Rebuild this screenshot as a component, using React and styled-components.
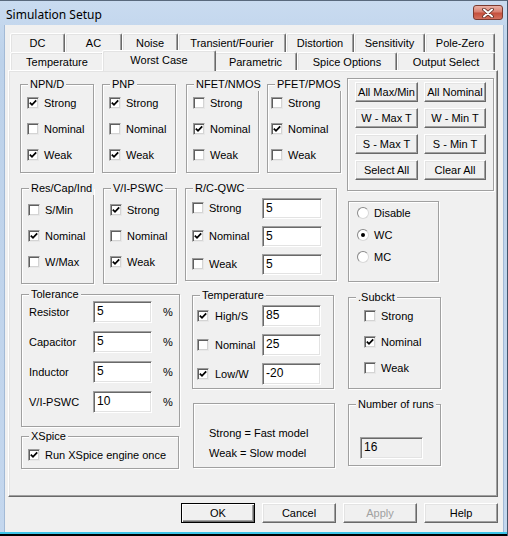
import React from 'react';
import styled, { createGlobalStyle } from 'styled-components';

const GlobalStyle = createGlobalStyle`
  html, body {
    margin: 0;
    padding: 0;
    background: #000;
  }
  body {
    font-family: "Liberation Sans", Arial, sans-serif;
    font-size: 11px;
    color: #000;
  }
`;

const Window = styled.div`
  width: 508px;
  height: 536px;
  box-sizing: border-box;
  border-top: 1px solid #59697d;
  border-right: 1px solid #44546a;
  background: linear-gradient(#c9dbf0, #bdd2ea 60px, #c4d7ee);
  display: flex;
  flex-direction: column;
  overflow: hidden;
`;

const TitleBar = styled.div`
  height: 24px;
  flex: none;
  display: flex;
  align-items: flex-start;
  padding: 0 4px 0 6px;
`;

const TitleText = styled.div`
  flex: 1;
  font-family: "Noto Sans", "Open Sans", sans-serif;
  font-size: 12px;
  line-height: 27px;
  color: #000;
`;

const CloseButton = styled.div`
  width: 30px;
  height: 15px;
  margin-top: 4px;
  box-sizing: border-box;
  border: 1px solid #7a3a30;
  border-radius: 3px;
  background: linear-gradient(#eab1a6, #d98172 45%, #c5503d 55%, #d4705e);
  display: flex;
  align-items: center;
  justify-content: center;
`;

const Body = styled.div`
  flex: none;
  height: 507px;
  margin: 0 3px 0 4px;
  border-left: 1px solid #a3bad6;
  border-right: 1px solid #a3bad6;
  background: #f0f0f0;
  display: flex;
  flex-direction: column;
`;

const BottomEdge = styled.div`
  flex: 1;
  margin-right: -1px;
  background: linear-gradient(#3cc4e8 0 2px, #000 2px);
`;

/* ---------- tabs ---------- */

const TabStrip = styled.div`
  margin: 8px 0 0 3px;
  width: 490px;
`;

const TabRow = styled.div`
  display: flex;
  padding-left: 2px;
  height: ${(p) => p.$h}px;
`;

const Tab = styled.div`
  box-sizing: border-box;
  width: ${(p) => p.$w}px;
  height: 100%;
  border: 1px solid;
  border-bottom: none;
  border-color: #fff #696969 transparent #fff;
  border-radius: 2px 2px 0 0;
  box-shadow: inset -1px 0 #a0a0a0, inset 1px 1px #e3e3e3;
  background: #f0f0f0;
  display: flex;
  align-items: center;
  justify-content: center;
  white-space: nowrap;
`;

const ActiveTab = styled(Tab)`
  position: relative;
  z-index: 1;
  width: ${(p) => p.$w + 4}px;
  height: calc(100% + 3px);
  margin: -2px -2px -1px;
  padding-bottom: 3px;
`;

const Panel = styled.div`
  margin-left: 3px;
  width: 490px;
  height: 427px;
  box-sizing: border-box;
  border: 1px solid;
  border-color: #fff #696969 #696969 #fff;
  box-shadow: inset -1px -1px #a0a0a0, inset 1px 1px #e3e3e3;
  padding: 7px 0 0 11px;
`;

/* ---------- layout ---------- */

const Row = styled.div`
  display: flex;
  align-items: flex-start;
  margin-top: ${(p) => p.$mt || 0}px;
`;

const Col = styled.div`
  display: flex;
  flex-direction: column;
  margin-left: ${(p) => p.$ml || 0}px;
  margin-top: ${(p) => p.$mt || 0}px;
`;

/* ---------- group boxes ---------- */

const Group = styled.div`
  position: relative;
  box-sizing: border-box;
  flex: none;
  width: ${(p) => p.$w}px;
  height: ${(p) => p.$h}px;
  margin-left: ${(p) => p.$ml || 0}px;
  margin-top: ${(p) => p.$mt || 0}px;
  padding: ${(p) => p.$pt || 0}px 0 0 ${(p) => p.$pl || 0}px;
  border: 1px solid #a0a0a0;
  box-shadow: inset 1px 1px #fff, 1px 1px #fff;
`;

const Legend = styled.span`
  position: absolute;
  top: -7px;
  left: 7px;
  padding: 0 2px;
  line-height: 13px;
  background: #f0f0f0;
  white-space: nowrap;
`;

const Item = styled.div`
  display: flex;
  align-items: center;
  height: ${(p) => p.$h}px;
  gap: ${(p) => p.$gap ?? 5}px;
  white-space: nowrap;
`;

const Label = styled.span`
  flex: none;
  width: ${(p) => (p.$w ? `${p.$w}px` : 'auto')};
`;

const CheckBox = styled.span`
  flex: none;
  width: 12px;
  height: 12px;
  box-sizing: border-box;
  background: #fff;
  border: 1px solid;
  border-color: #9a9a9a #e8e8e8 #e8e8e8 #9a9a9a;
  box-shadow: inset 1px 1px #5f5f5f, inset -1px -1px #d4d4d4;
  display: flex;
  align-items: center;
  justify-content: center;
`;

const RadioCircle = styled.span`
  flex: none;
  width: 12px;
  height: 12px;
  box-sizing: border-box;
  border-radius: 50%;
  border: 1px solid;
  border-color: #8a8a8a #d8d8d8 #d8d8d8 #8a8a8a;
  background: #fff;
  display: flex;
  align-items: center;
  justify-content: center;

  &::after {
    content: '';
    width: 4px;
    height: 4px;
    border-radius: 50%;
    background: ${(p) => (p.$on ? '#000' : 'transparent')};
  }
`;

const Field = styled.div`
  flex: none;
  box-sizing: border-box;
  width: ${(p) => p.$w}px;
  height: ${(p) => p.$h || 22}px;
  border: 1px solid;
  border-color: #a0a0a0 #fff #fff #a0a0a0;
  box-shadow: inset 1px 1px #696969, inset -1px -1px #e3e3e3;
  background: ${(p) => (p.$disabled ? '#f0f0f0' : '#fff')};
  padding: 2px 0 0 3px;
  font-size: 12px;
  line-height: 14px;
`;

const Percent = styled.span`
  margin-left: 11px;
`;

const ButtonGrid = styled.div`
  display: grid;
  grid-template-columns: 63px 62px;
  grid-auto-rows: 20px;
  column-gap: 6px;
  row-gap: 6px;
`;

const PushButton = styled.div`
  box-sizing: border-box;
  width: ${(p) => (p.$w ? `${p.$w}px` : 'auto')};
  height: 20px;
  background: #f0f0f0;
  border: 1px solid;
  border-color: ${(p) => (p.$default ? '#000' : '#fff #696969 #696969 #fff')};
  box-shadow: ${(p) =>
    p.$default
      ? 'inset 1px 1px #fff, inset -1px -1px #696969, inset -2px -2px #a0a0a0'
      : 'inset -1px -1px #a0a0a0, inset 1px 1px #e3e3e3'};
  color: ${(p) => (p.$disabled ? '#a0a0a0' : '#000')};
  display: flex;
  align-items: center;
  justify-content: center;
  white-space: nowrap;
`;

const InfoText = styled.div`
  line-height: 20px;
  font-size: 11px;
`;

const Footer = styled.div`
  display: flex;
  justify-content: flex-end;
  gap: 7px;
  padding-right: 5px;
  margin-top: 6px;
`;

/* ---------- small parts ---------- */

function Check({ on }) {
  return (
    <CheckBox>
      {on && (
        <svg width="8" height="8" viewBox="0 0 8 8">
          <path d="M0.8 3.6 L3 5.8 L7.2 1.4" fill="none" stroke="#000" strokeWidth="1.8" />
        </svg>
      )}
    </CheckBox>
  );
}

function CheckItem({ on, label, h = 26, gap = 5, w }) {
  return (
    <Item $h={h} $gap={gap}>
      <Check on={on} />
      <Label $w={w}>{label}</Label>
    </Item>
  );
}

function CheckGroup({ title, items, ...rest }) {
  return (
    <Group {...rest}>
      <Legend>{title}</Legend>
      {items.map(([label, on]) => (
        <CheckItem key={label} label={label} on={on} />
      ))}
    </Group>
  );
}

const topRowA = [
  { title: 'NPN/D', w: 74, ml: 0, pl: 6, items: [['Strong', true], ['Nominal', false], ['Weak', true]] },
  { title: 'PNP', w: 74, ml: 8, pl: 6, items: [['Strong', true], ['Nominal', false], ['Weak', true]] },
  { title: 'NFET/NMOS', w: 73, ml: 10, pl: 6, items: [['Strong', false], ['Nominal', true], ['Weak', false]] },
  { title: 'PFET/PMOS', w: 74, ml: 8, pl: 3, items: [['Strong', false], ['Nominal', true], ['Weak', false]] },
];

const tabsBack = [
  ['DC', 55], ['AC', 57], ['Noise', 56], ['Transient/Fourier', 108],
  ['Distortion', 68], ['Sensitivity', 71], ['Pole-Zero', 70],
];

const tabsFront = [
  ['Temperature', 94], ['Worst Case', 110], ['Parametric', 83],
  ['Spice Options', 100], ['Output Select', 98],
];

const presetButtons = [
  'All Max/Min', 'All Nominal', 'W - Max T', 'W - Min T',
  'S - Max T', 'S - Min T', 'Select All', 'Clear All',
];

export default function App() {
  return (
    <>
      <GlobalStyle />
      <Window>
        <TitleBar>
          <TitleText>Simulation Setup</TitleText>
          <CloseButton>
            <svg width="14" height="10" viewBox="0 0 14 10">
              <path d="M3 1.5 L11 8.5 M11 1.5 L3 8.5" stroke="#5a2a22" strokeWidth="3.6" strokeLinecap="round" />
              <path d="M3 1.5 L11 8.5 M11 1.5 L3 8.5" stroke="#fff" strokeWidth="2" strokeLinecap="round" />
            </svg>
          </CloseButton>
        </TitleBar>

        <Body>
          <TabStrip>
            <TabRow $h={19}>
              {tabsBack.map(([t, w]) => (
                <Tab key={t} $w={w}>{t}</Tab>
              ))}
            </TabRow>
            <TabRow $h={18}>
              {tabsFront.map(([t, w]) =>
                t === 'Worst Case' ? (
                  <ActiveTab key={t} $w={w}>{t}</ActiveTab>
                ) : (
                  <Tab key={t} $w={w}>{t}</Tab>
                )
              )}
            </TabRow>
          </TabStrip>

          <Panel>
            <Row>
              <Col>
                <Row $mt={6}>
                  {topRowA.map((g) => (
                    <CheckGroup
                      key={g.title}
                      title={g.title}
                      items={g.items}
                      $w={g.w}
                      $h={89}
                      $ml={g.ml}
                      $pt={5}
                      $pl={g.pl}
                    />
                  ))}
                </Row>
                <Row $mt={15}>
                  <CheckGroup
                    title="Res/Cap/Ind"
                    items={[['S/Min', false], ['Nominal', true], ['W/Max', false]]}
                    $w={73} $h={96} $ml={1} $pt={8} $pl={6}
                  />
                  <CheckGroup
                    title="V/I-PSWC"
                    items={[['Strong', true], ['Nominal', false], ['Weak', true]]}
                    $w={74} $h={96} $ml={9} $pt={8} $pl={6}
                  />
                  <Group $w={152} $h={93} $ml={8} $pt={5} $pl={6}>
                    <Legend>R/C-QWC</Legend>
                    {[['Strong', false], ['Nominal', true], ['Weak', false]].map(([label, on]) => (
                      <Item key={label} $h={28}>
                        <Check on={on} />
                        <Label $w={48}>{label}</Label>
                        <Field $w={60} $h={21}>5</Field>
                      </Item>
                    ))}
                  </Group>
                </Row>
              </Col>

              <Col $ml={6}>
                <Group $w={147} $h={113} $pt={3} $pl={7}>
                  <ButtonGrid>
                    {presetButtons.map((b) => (
                      <PushButton key={b}>{b}</PushButton>
                    ))}
                  </ButtonGrid>
                </Group>
                <Group $w={91} $h={81} $mt={10} $ml={1} $pl={8}>
                  {[['Disable', false], ['WC', true], ['MC', false]].map(([label, on]) => (
                    <Item key={label} $h={22}>
                      <RadioCircle $on={on} />
                      <Label>{label}</Label>
                    </Item>
                  ))}
                </Group>
              </Col>
            </Row>

            <Row $mt={10}>
              <Col $ml={1}>
                <Group $w={159} $h={133} $pt={2} $pl={7}>
                  <Legend>Tolerance</Legend>
                  {[['Resistor', '5'], ['Capacitor', '5'], ['Inductor', '5'], ['V/I-PSWC', '10']].map(([label, v]) => (
                    <Item key={label} $h={30} $gap={0}>
                      <Label $w={64}>{label}</Label>
                      <Field $w={59}>{v}</Field>
                      <Percent>%</Percent>
                    </Item>
                  ))}
                </Group>
                <Group $w={158} $h={33} $mt={9} $pt={7} $pl={6}>
                  <Legend>XSpice</Legend>
                  <CheckItem h={22} on label="Run XSpice engine once" />
                </Group>
              </Col>

              <Col $ml={12} $mt={1}>
                <Group $w={142} $h={94} $pt={5} $pl={4}>
                  <Legend>Temperature</Legend>
                  {[['High/S', true, '85'], ['Nominal', false, '25'], ['Low/W', true, '-20']].map(([label, on, v]) => (
                    <Item key={label} $h={29} $gap={6}>
                      <Check on={on} />
                      <Label $w={41}>{label}</Label>
                      <Field $w={59}>{v}</Field>
                    </Item>
                  ))}
                </Group>
                <Group $w={142} $h={65} $mt={14} $ml={1} $pt={19} $pl={15}>
                  <InfoText>Strong = Fast model</InfoText>
                  <InfoText>Weak = Slow model</InfoText>
                </Group>
              </Col>

              <Col $ml={13} $mt={3}>
                <CheckGroup
                  title=".Subckt"
                  items={[['Strong', false], ['Nominal', true], ['Weak', false]]}
                  $w={93} $h={92} $pt={5} $pl={15}
                />
                <Group $w={93} $h={62} $mt={15} $pt={32} $pl={11}>
                  <Legend>Number of runs</Legend>
                  <Field $w={63} $disabled>16</Field>
                </Group>
              </Col>
            </Row>
          </Panel>

          <Footer>
            <PushButton $w={74} $default>OK</PushButton>
            <PushButton $w={74}>Cancel</PushButton>
            <PushButton $w={74} $disabled>Apply</PushButton>
            <PushButton $w={74}>Help</PushButton>
          </Footer>
        </Body>
        <BottomEdge />
      </Window>
    </>
  );
}
